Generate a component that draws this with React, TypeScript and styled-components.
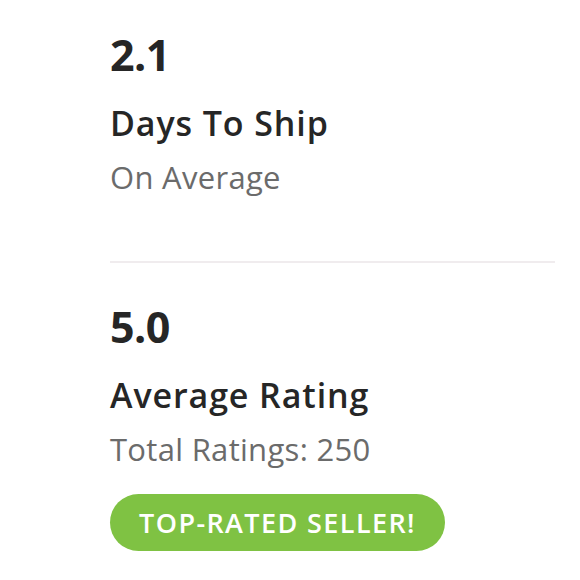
import React from "react";
import styled, { createGlobalStyle } from "styled-components";

const Global = createGlobalStyle`
  html, body { margin: 0; padding: 0; background: #ffffff; }
  body { font-family: "Open Sans", "Lato", sans-serif; }
`;

const Page = styled.main`
  width: 580px;
  height: 580px;
  box-sizing: border-box;
  padding: 0 25px 0 110px;
  display: flex;
  flex-direction: column;
  overflow: hidden;
`;

const Stat = styled.section<{ $top: number }>`
  display: flex;
  flex-direction: column;
  align-items: flex-start;
  padding-top: ${(p) => p.$top}px;
`;

const Value = styled.div`
  font-size: 43px;
  line-height: 1;
  font-weight: 700;
  color: #262626;
  letter-spacing: -0.5px;
`;

const Label = styled.div`
  margin-top: 30px;
  font-size: 34px;
  line-height: 1;
  font-weight: 600;
  color: #262626;
  letter-spacing: 0.9px;
`;

const Sub = styled.div`
  margin-top: 22px;
  font-size: 31px;
  line-height: 1;
  font-weight: 400;
  color: #6b6b6b;
  letter-spacing: 0.3px;
`;

const Divider = styled.hr`
  margin: 68px 0 0 0;
  border: none;
  height: 2px;
  background: #f0ecee;
  width: 100%;
`;

const Badge = styled.div`
  margin-top: 29px;
  width: 335px;
  height: 57px;
  border-radius: 29px;
  background: #7fc243;
  color: #ffffff;
  display: flex;
  align-items: center;
  justify-content: center;
  font-size: 27px;
  font-weight: 600;
  letter-spacing: 1.4px;
`;

export default function App() {
  return (
    <>
      <Global />
      <Page>
        <Stat $top={33}>
          <Value>2.1</Value>
          <Label>Days To Ship</Label>
          <Sub>On Average</Sub>
        </Stat>
        <Divider />
        <Stat $top={42}>
          <Value>5.0</Value>
          <Label>Average Rating</Label>
          <Sub>Total Ratings: 250</Sub>
          <Badge>TOP-RATED SELLER!</Badge>
        </Stat>
      </Page>
    </>
  );
}
